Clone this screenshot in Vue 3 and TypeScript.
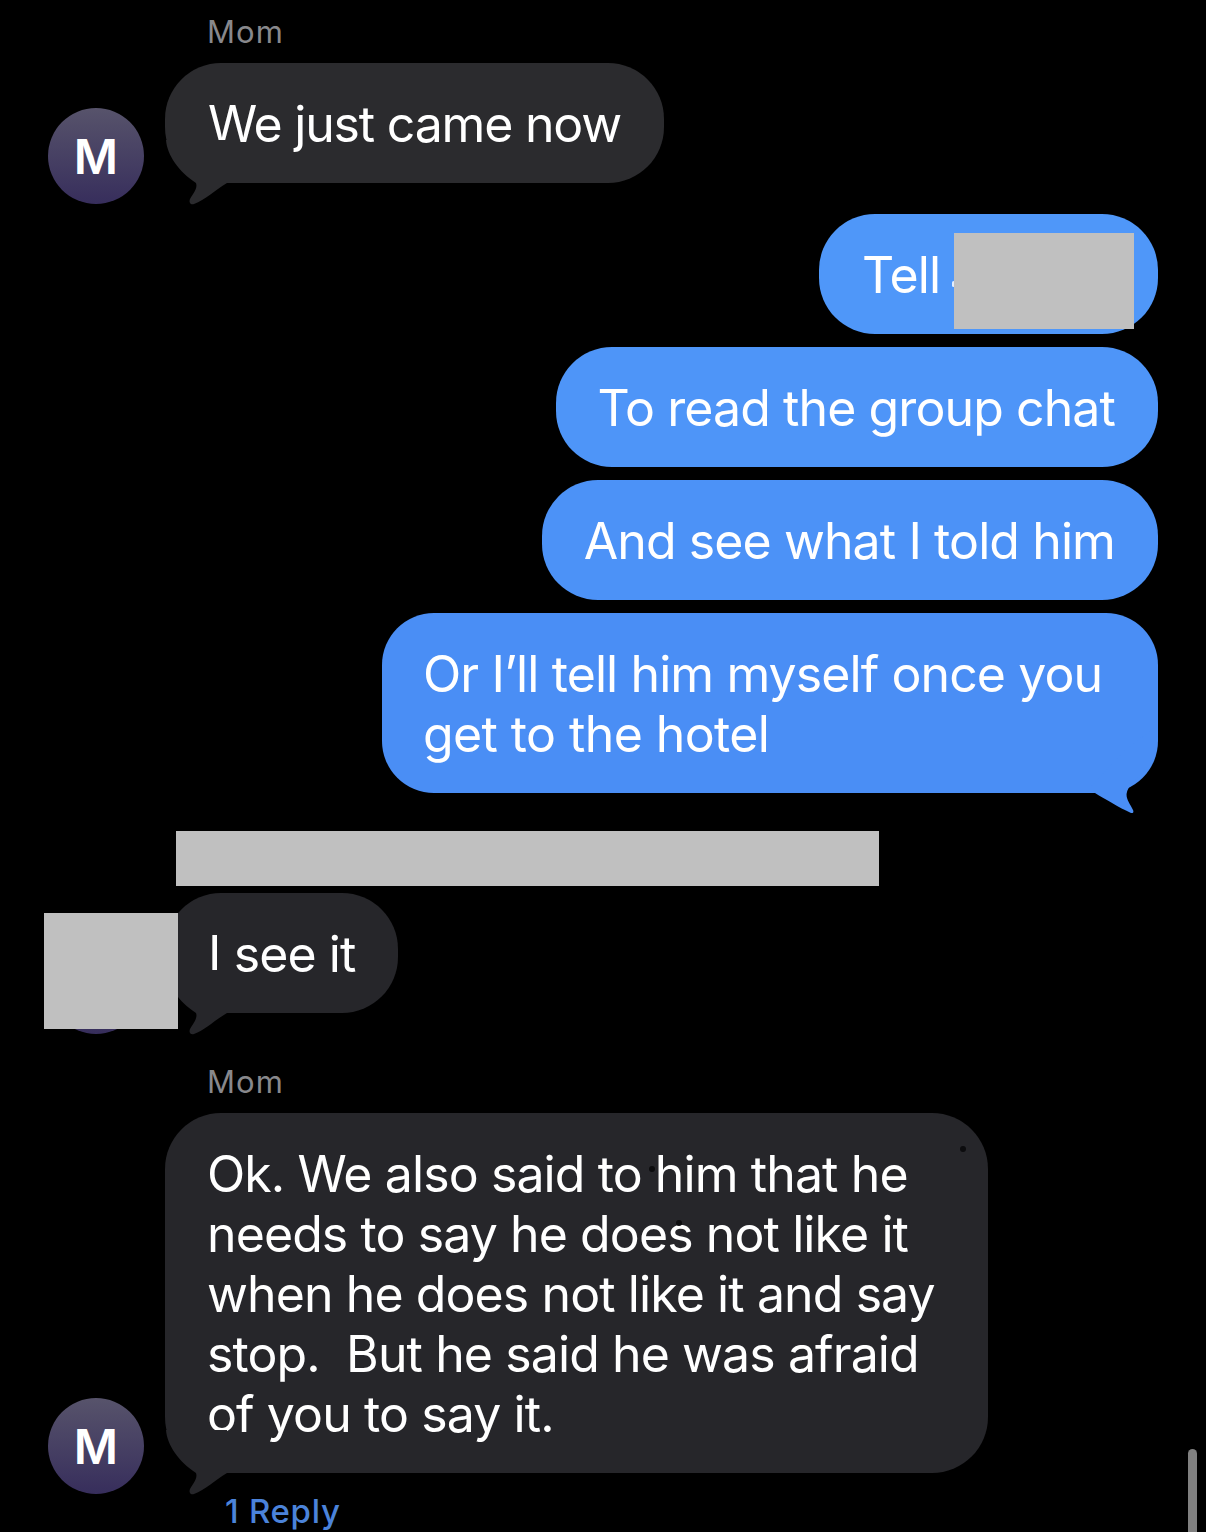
<script setup lang="ts">
interface OutMsg { lines: string[]; cls: string }
const outgoing: OutMsg[] = [
  { lines: ['To read the group chat'], cls: 'b2' },
  { lines: ['And see what I told him'], cls: 'b3' },
]
const longLines: string[] = [
  'Ok. We also said to him that he',
  'needs to say he does not like it',
  'when he does not like it and say',
  'stop.  But he said he was afraid',
  'of you to say it.',
]
const tailIn = 'M1 -20C2 -5 14 12 31 23C33 28 28 34 25 39C23.5 43 26 45 29 44C40 40 50 30 62 23V-20Z'
const tailOut = 'M0 23H10C20 29 35 38 45 42.500C48 44 49 42 48 40C45 34 40 28 42 22C44 14 60 2 66 -8C71 -16 73 -28 73 -45L40 -20Z'
</script>

<template>
  <main class="page">
    <div class="name first">Mom</div>
    <section class="row">
      <div class="avatar">M</div>
      <div class="bubble in in-top">
        <span>We just came now</span>
        <svg class="tail-in" viewBox="0 0 70 46" width="70" height="46"><path fill="#2b2b2e" :d="tailIn"/></svg>
      </div>
    </section>

    <section class="outgoing">
      <div class="bubble out b1">
        <span class="tell">Tell</span>
        <i class="speck"></i>
        <div class="redact r-tell"></div>
      </div>
      <div v-for="m in outgoing" :key="m.cls" class="bubble out" :class="m.cls">
        <span v-for="l in m.lines" :key="l">{{ l }}</span>
      </div>
      <div class="bubble out b4">
        <span>Or I’ll tell him myself once you</span>
        <span class="hotel">get to the hotel</span>
        <svg class="tail-out" viewBox="0 0 73 46" width="73" height="46"><path fill="#4a8ef5" :d="tailOut"/></svg>
      </div>
    </section>

    <div class="redact r-name"></div>

    <section class="row see">
      <div class="avatar">M</div>
      <div class="bubble in in-mid">
        <span>I see it</span>
        <svg class="tail-in" viewBox="0 0 70 46" width="70" height="46"><path fill="#26262a" :d="tailIn"/></svg>
      </div>
      <div class="redact r-avatar"></div>
    </section>

    <div class="name second">Mom</div>
    <section class="row">
      <div class="avatar">M</div>
      <div class="bubble in in-long">
        <span v-for="l in longLines" :key="l">{{ l }}</span>
        <svg class="tail-in" viewBox="0 0 70 46" width="70" height="46"><path fill="#26262a" :d="tailIn"/></svg>
        <i class="dust d1"></i>
        <i class="dust d2"></i>
        <i class="dust d3"></i>
      </div>
    </section>
    <div class="reply">1 Reply</div>
    <div class="scrollbar"></div>
  </main>
</template>

<style scoped>
.page {
  position: relative;
  width: 1206px;
  height: 1532px;
  overflow: hidden;
  background: #000;
  color: #fff;
  font-family: Inter, "Liberation Sans", sans-serif;
  display: flex;
  flex-direction: column;
}
.name {
  font-size: 31px;
  line-height: 36px;
  letter-spacing: 1.1px;
  color: #88888c;
  margin-left: 207px;
  margin-bottom: 13px;
}
.first { margin-top: 14px; }
.second { margin-top: 30px; }
.row {
  position: relative;
  display: flex;
  align-items: flex-end;
  gap: 21px;
  padding-left: 48px;
}
.avatar {
  flex: none;
  width: 96px;
  height: 96px;
  border-radius: 50%;
  padding-top: 1px;
  box-sizing: border-box;
  background: linear-gradient(#57536b, #372e5c);
  display: flex;
  align-items: center;
  justify-content: center;
  font-size: 48px;
  font-weight: 600;
}
.bubble {
  position: relative;
  box-sizing: border-box;
  display: flex;
  flex-direction: column;
  justify-content: center;
  padding: 2px 43px 0;
  font-size: 50px;
  line-height: 60px;
  letter-spacing: -0.9px;
  border-radius: 56px;
  min-height: 120px;
  white-space: pre;
}
.in { margin-bottom: 21px; }
.in-top { background: #2b2b2e; letter-spacing: -1.2px; }
.in-mid { background: #26262a; padding-right: 42px; }
.in-long { background: #26262a; width: 823px; height: 360px; padding-left: 42px; }
.tail-in {
  position: absolute;
  left: 0;
  bottom: -23px;
  overflow: visible;
}
.outgoing {
  display: flex;
  flex-direction: column;
  align-items: flex-end;
  gap: 13px;
  padding-right: 48px;
  margin-top: 10px;
}
.out { padding-left: 42px; }
.b1 { background: #4f97f9; width: 339px; padding-left: 44px; }
.tell { margin-left: -1px; }
.b2 { background: #4e95f8; padding-left: 41px; }
.b3 { background: #4c92f7; padding-left: 42px; }
.b4 { background: #4a8ef5; width: 776px; height: 180px; border-radius: 52px; padding-left: 41px; }
.hotel { letter-spacing: -0.6px; }
.tail-out {
  position: absolute;
  right: 0;
  bottom: -23px;
  overflow: visible;
}
.redact {
  background: #c0c0c0;
}
.r-tell {
  position: absolute;
  left: 135px;
  top: 19px;
  width: 180px;
  height: 96px;
}
.speck {
  position: absolute;
  left: 133px;
  top: 67px;
  width: 3px;
  height: 6px;
  background: #e3eeff;
  border-radius: 2px;
}
.r-name {
  flex: none;
  width: 703px;
  height: 55px;
  margin: 38px 0 7px 176px;
}
.r-avatar {
  position: absolute;
  left: 44px;
  top: 20px;
  width: 134px;
  height: 116px;
}
.dust {
  position: absolute;
  width: 6px;
  height: 6px;
  border-radius: 50%;
  background: #0c0c0e;
}
.d1 { left: 484px; top: 53px; }
.d2 { left: 511px; top: 107px; }
.d3 { left: 795px; top: 33px; }
.reply {
  margin-left: 225px;
  font-size: 33px;
  line-height: 34px;
  font-weight: 500;
  letter-spacing: 0.7px;
  color: #4b83da;
}
.scrollbar {
  position: absolute;
  left: 1188px;
  top: 1449px;
  width: 9px;
  height: 100px;
  border-radius: 5px;
  background: #808080;
}
</style>
